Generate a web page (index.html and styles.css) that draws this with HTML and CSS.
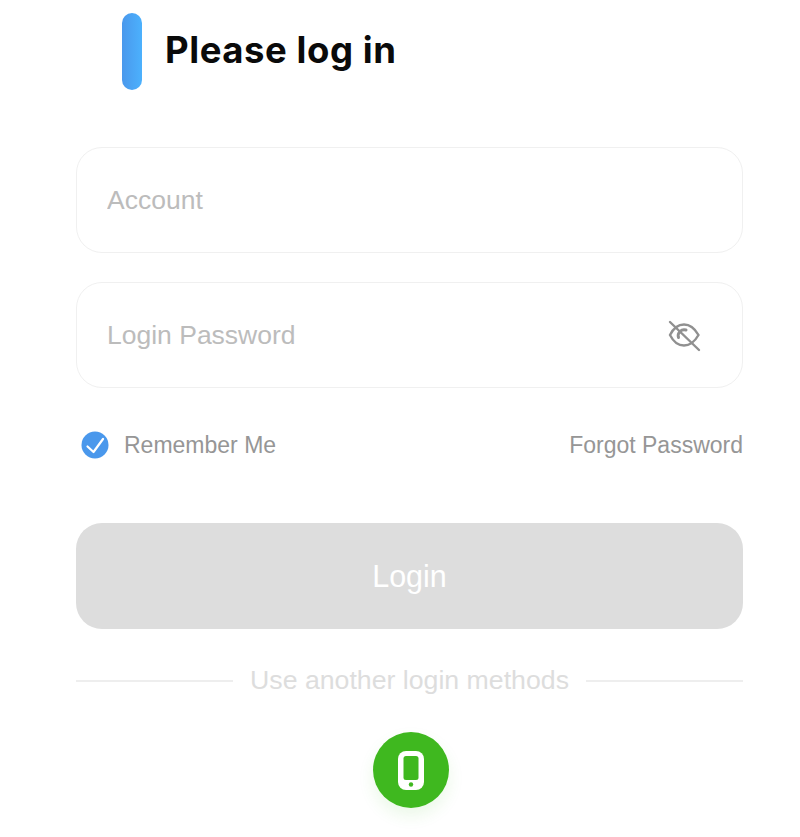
FILE: index.html
```html
<!DOCTYPE html>
<html>
<head>
  <title>Please log in</title>
  <link rel="stylesheet" href="styles.css">
</head>
<body>

<div class="container">
  <div class="title-row">
    <span class="title-bar"></span>
    <h1>Please log in</h1>
  </div>

  <div class="field">
    <input type="text" placeholder="Account">
  </div>

  <div class="field">
    <input type="password" placeholder="Login Password">
    <svg class="eye" width="34" height="34" viewBox="0 0 34 34" fill="none" stroke="#909090" stroke-width="2.4" stroke-linecap="round">
      <path d="M3 17c3.500-7 8.500-10.500 14-10.500S27.500 10 31.500 17c-4 7-9 10.500-14.500 10.500S6.500 24 3 17z"/>
      <path d="M11.500 19.500a6 6 0 0 1 7.500-7.500" stroke-width="3"/>
      <path d="M3 4l29 28"/>
    </svg>
  </div>

  <div class="options">
    <label class="remember">
      <svg width="28" height="28" viewBox="0 0 28 28">
        <circle cx="14" cy="14" r="13.500" fill="#4a98ec"/>
        <path d="M6.500 15.500l6 5.500 9.500-13" fill="none" stroke="#fff" stroke-width="2.200" stroke-linecap="round" stroke-linejoin="round"/>
      </svg>
      <span>Remember Me</span>
    </label>
    <a class="forgot">Forgot Password</a>
  </div>

  <button class="login-btn">Login</button>

  <div class="divider">
    <span class="line"></span>
    <span class="divider-text">Use another login methods</span>
    <span class="line"></span>
  </div>

  <div class="other-login">
    <div class="phone-btn">
      <svg width="30" height="40" viewBox="0 0 30 40">
        <rect x="2" y="1" width="26" height="39" rx="8" fill="#fff"/>
        <rect x="7.500" y="6" width="15" height="24" rx="2.500" fill="#3fb81f"/>
        <circle cx="15" cy="34.500" r="2.200" fill="#3fb81f"/>
      </svg>
    </div>
  </div>
</div>

</body>
</html>
```

FILE: styles.css
```css
body {
  font-family: 'Liberation Sans', Arial, sans-serif;
  background-color: #fff;
  margin: 0;
  color: #999;
}

.container {
  width: 667px;
  margin-left: 76px;
  height: 837px;
  overflow: hidden;
}

.title-row {
  display: flex;
  align-items: center;
  gap: 23px;
  margin-top: 13px;
  margin-left: 46px;
  height: 77px;
  margin-bottom: 57px;
}

.title-bar {
  width: 20px;
  height: 77px;
  border-radius: 10px;
  background: linear-gradient(90deg, #4a98ec, #4cb1fd);
}

h1 {
  margin: 0 0 3px;
  font-family: Inter, sans-serif;
  font-size: 36.500px;
  font-weight: 700;
  letter-spacing: 0.55px;
  color: #0a0a0a;
}

.field {
  display: flex;
  align-items: center;
  height: 106px;
  box-sizing: border-box;
  border: 1px solid #f0f0f0;
  border-radius: 26px;
  padding: 0 41px 0 30px;
  margin-bottom: 29px;
}

.field input {
  flex: 1;
  min-width: 0;
  border: none;
  outline: none;
  padding: 0;
  font-family: inherit;
  font-size: 26.500px;
}

.field input::placeholder {
  color: #bcbcbc;
  opacity: 1;
}

.eye {
  flex: none;
}

.options {
  display: flex;
  justify-content: space-between;
  align-items: center;
  height: 28px;
  margin-top: 43px;
  font-size: 23px;
  color: #969696;
}

.remember {
  display: flex;
  align-items: center;
  gap: 15px;
  margin-left: 5px;
}

.login-btn {
  display: block;
  width: 100%;
  height: 106px;
  margin-top: 64px;
  border: none;
  border-radius: 26px;
  background-color: #dddddd;
  color: #fff;
  font-family: inherit;
  font-size: 30.500px;
}

.divider {
  display: flex;
  align-items: center;
  gap: 17px;
  margin-top: 32px;
  height: 38px;
}

.line {
  flex: 1;
  height: 2px;
  margin-top: 2px;
  background-color: #eeeeee;
}

.divider-text {
  font-size: 26.700px;
  color: #dddddd;
}

.other-login {
  display: flex;
  justify-content: center;
  margin-top: 33px;
}

.phone-btn {
  width: 76px;
  height: 76px;
  margin-left: 2px;
  border-radius: 50%;
  background-color: #3fb81f;
  display: flex;
  align-items: center;
  justify-content: center;
  box-shadow: 0 8px 16px rgba(63, 184, 31, 0.1);
}
```
